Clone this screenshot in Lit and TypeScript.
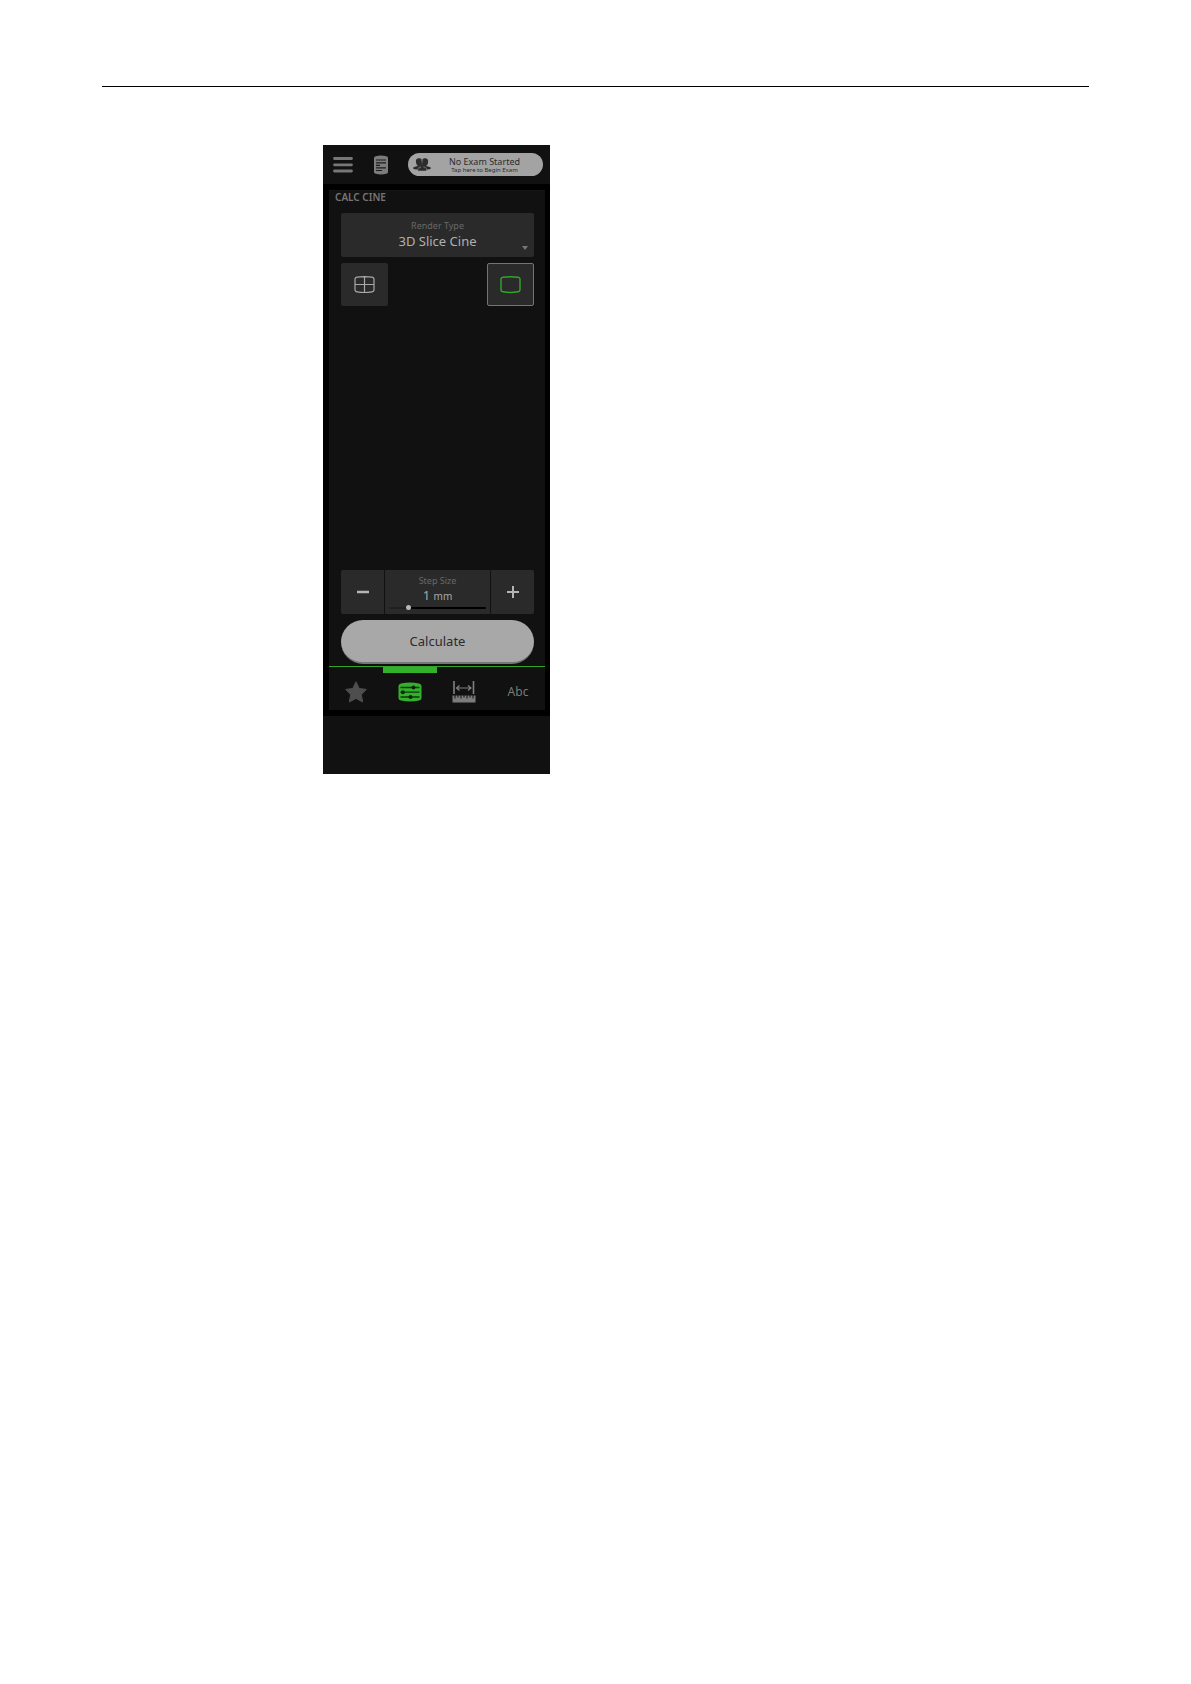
import { LitElement, html, css, svg } from "lit";
import { customElement, state } from "lit/decorators.js";

const menuIcon = svg`<svg class="icon" width="20" height="16" viewBox="0 0 20 16" aria-hidden="true">
  <path d="M1.500 1.500h17M1.500 7.800h17M1.500 14h17" stroke="#777" stroke-width="2.800" stroke-linecap="round"/>
</svg>`;

const reportIcon = svg`<svg class="icon" width="16" height="20" viewBox="0 0 16 20" aria-hidden="true">
  <path d="M1 2.500Q1.300 1 8 .6Q14.700 1 15 2.500V17.500Q14.700 19 8 19.400Q1.300 19 1 17.500Z" fill="#7c7c7c"/>
  <path d="M3 5h10M3 7.800h10M3 10.300h4M3 12.800h10M3 15.500h6" stroke="#1b1b1b" stroke-width="1.200"/>
</svg>`;

const patientsIcon = svg`<svg class="icon" width="18" height="13" viewBox="0 0 18 13" aria-hidden="true">
  <g fill="#2c2c2c">
    <path d="M9.300 1.300C10.800 -.3 14.900 -.4 15.100 2.800C15.300 5.200 14.600 7 13 8C14.500 8.600 17.900 8.600 17.900 10.400Q16 12 12.500 11.200L9 8.500Z"/>
    <path d="M8.800 1.300C7.200 -.3 3.100 -.4 2.900 2.800C2.800 5.200 3.600 7 5 8C3.500 8.600 .1 8.600 .1 10.400Q2 12 5.500 11.200L9 8.500Z"/>
    <path d="M4.800 12.800Q5 10.400 8 9.800V7.500H10.500V9.800Q13.300 10.400 13.500 12.800Z"/>
  </g>
  <path d="M9 .8V3.500M4.600 10.800Q6 9 8 8.800M13.600 10.800Q12.500 9 10.500 8.800" stroke="#9a9a9a" stroke-width=".6" fill="none"/>
</svg>`;

const screenPath = "M1 2.800Q1.200 1.500 3 1.200Q10.500 .2 18 1.200Q19.800 1.500 20 2.800V14.200Q19.800 15.500 18 15.800Q10.500 17.200 3 15.800Q1.200 15.500 1 14.200Z";

const quadIcon = svg`<svg class="icon" width="21" height="18" viewBox="0 0 21 18" aria-hidden="true">
  <path d="${screenPath}M10.500 1V16.500M1 8.500H20" fill="none" stroke="#a9a9a9" stroke-width="1.200"/>
</svg>`;

const singleIcon = svg`<svg class="icon" width="21" height="18" viewBox="0 0 21 18" aria-hidden="true">
  <path d="${screenPath}" fill="none" stroke="#31a52a" stroke-width="1.400"/>
</svg>`;

const minusIcon = svg`<svg class="icon" width="12" height="12" viewBox="0 0 12 12" aria-hidden="true">
  <path d="M0 6H12" stroke="#b4b4b4" stroke-width="2.400"/>
</svg>`;

const plusIcon = svg`<svg class="icon" width="12" height="12" viewBox="0 0 12 12" aria-hidden="true">
  <path d="M0 6H12M6 0V12" stroke="#b4b4b4" stroke-width="2"/>
</svg>`;

const starIcon = svg`<svg class="icon" width="24" height="24" viewBox="0 0 24 24" aria-hidden="true">
  <path d="M12 1.800L15.200 8.500L22.300 9.400L17.300 14.600L18.700 22L12 18.400L5.300 22L6.700 14.600L1.700 9.400L8.800 8.500Z" fill="#4e4e4e" stroke="#4e4e4e" stroke-linejoin="round"/>
</svg>`;

const controlsIcon = svg`<svg class="icon" width="24" height="20" viewBox="0 0 24 20" aria-hidden="true">
  <path d="M.5 4Q.5 2 3 1.500Q12 -.6 21 1.500Q23.500 2 23.500 4V16Q23.500 18 21 18.500Q12 20.600 3 18.500Q.5 18 .5 16Z" fill="#33b12b"/>
  <path d="M2.500 5.500H21.500M2.500 10.200H21.500M2.500 15H21.500" stroke="#123810" stroke-width="1.300"/>
  <circle cx="15.500" cy="5.500" r="2" fill="#0e260d"/><circle cx="4.800" cy="10.200" r="2" fill="#0e260d"/><circle cx="12.500" cy="15" r="2" fill="#0e260d"/>
</svg>`;

const measureIcon = svg`<svg class="icon" width="24" height="22" viewBox="0 0 24 22" aria-hidden="true">
  <path d="M2 0V13M21.500 0V13" stroke="#808080" stroke-width="1.600"/>
  <path d="M4.500 7H19M7.500 4.500L4.500 7L7.500 9.500M16 4.500L19 7L16 9.500" fill="none" stroke="#808080" stroke-width="1.200"/>
  <path d="M.5 14.500H2.500V17.500H3.500V14.500H5.500V16.500H6.500V14.500H8.500V17.500H9.500V14.500H11.500V16.500H12.500V14.500H14.500V17.500H15.500V14.500H17.500V16.500H18.500V14.500H20.500V17.500H21.500V14.500H23.500V21.500H.5Z" fill="#7c7c7c"/>
</svg>`;

@customElement("app-root")
export class AppRoot extends LitElement {
  @state() private step = 1;
  @state() private view = "single";
  @state() private tab = "controls";

  static styles = css`
    :host { display: block; background: #fff; font-family: "Noto Sans", sans-serif; }
    * { box-sizing: border-box; }
    button, select, input { font: inherit; color: inherit; margin: 0; padding: 0; border: 0; background: none; }
    button { cursor: pointer; }
    .icon { display: block; flex: none; }
    .page { padding: 86px 102px; }
    .rule { height: 1px; margin: 0 0 58px; border: 0; background: #000; }
    .figure { display: grid; grid-template-columns: 221fr 227fr 539fr; }
    .device { grid-column: 2; background: #111; padding-bottom: 58px; }
    .topbar { display: flex; align-items: center; height: 39px; padding: 0 7px 0 10px; }
    .report { margin-left: 20px; }
    .exam { display: flex; align-items: center; flex: 1; height: 23px; margin-left: 19px; padding: 0 5px; border-radius: 12px; background: #a3a3a3; color: #2b2b2b; }
    .exam-text { flex: 1; display: flex; flex-direction: column; align-items: center; padding-top: 2px; font-size: 6px; line-height: 7px; white-space: nowrap; }
    .exam-title { font-size: 9px; line-height: 10px; }
    .well { background: #000; padding: 6px 5px 6px 6px; }
    .panel { background: #111; border-top: 1px solid #161616; }
    .title { margin: 0; padding: 0 6px; font-size: 10px; line-height: 12px; font-weight: 600; color: #757575; }
    .body { display: flex; flex-direction: column; height: 463px; padding: 10px 11px 2px 12px; gap: 6px; }
    .select { display: grid; height: 44px; border-radius: 2px; background: #2a2a2a; }
    .select > * { grid-area: 1 / 1; }
    .caption { font-size: 9px; line-height: 12px; color: #686868; text-align: center; }
    .select .caption { padding-top: 7px; }
    .select select { appearance: none; width: 100%; padding-top: 12px; font-size: 13px; text-align-last: center; color: #b0b0b0; cursor: pointer; }
    .caret { align-self: end; justify-self: end; margin: 0 6px 7px; border: 3px solid transparent; border-top: 4px solid #777; border-bottom: 0; pointer-events: none; }
    .views { display: flex; justify-content: space-between; }
    .view { display: grid; place-items: center; width: 47px; height: 43px; border-radius: 2px; background: #2a2a2a; }
    .view.on { border: 1px solid #31a52a; }
    .stepper { display: grid; grid-template-columns: 43px 1fr 43px; gap: 1px; height: 44px; margin-top: auto; border-radius: 2px; overflow: hidden; }
    .stepper > * { background: #2a2a2a; }
    .stepper button { display: grid; place-items: center; }
    .value { display: flex; flex-direction: column; padding: 5px 4px 0; }
    .value output { font-size: 13px; line-height: 17px; text-align: center; color: #a8a8a8; }
    .unit { font-size: 10px; }
    .range { appearance: none; width: 100%; height: 6px; border-radius: 1px; }
    .range::-webkit-slider-runnable-track { height: 2px; border-radius: 1px; background: linear-gradient(90deg, #202020 18%, #000 18%); }
    .range::-webkit-slider-thumb { appearance: none; width: 5px; height: 5px; margin-top: -2px; border-radius: 50%; background: #b8b8b8; }
    .calculate { flex: none; height: 44px; border-radius: 22px; background: #a8a8a8; border-bottom: 2px solid #777; font-size: 13px; color: #2b2b2b; }
    .tabs { display: grid; grid-template-columns: repeat(4, 1fr); height: 44px; border-top: 1px solid #31a52a; }
    .tab { display: grid; place-items: center; padding-top: 6px; border-top: 0 solid #33b12b; font-size: 12px; color: #7a7a7a; }
    .tab.on { border-top-width: 6px; padding: 0; }
  `;

  private setStep(value: number) {
    this.step = Math.min(5.5, Math.max(0, value));
  }

  private tabButton(id: string, label: string, content: unknown) {
    return html`<button class="tab ${this.tab === id ? "on" : ""}" role="tab" aria-label=${label}
      aria-selected=${this.tab === id ? "true" : "false"} @click=${() => (this.tab = id)}>${content}</button>`;
  }

  render() {
    return html`
      <main class="page">
        <hr class="rule" />
        <div class="figure">
          <section class="device">
            <header class="topbar">
              <button aria-label="Menu">${menuIcon}</button>
              <button class="report" aria-label="Report">${reportIcon}</button>
              <button class="exam">
                ${patientsIcon}
                <span class="exam-text"><span class="exam-title">No Exam Started</span><span>Tap here to Begin Exam</span></span>
              </button>
            </header>
            <div class="well">
              <div class="panel">
                <h1 class="title">CALC CINE</h1>
                <div class="body">
                  <div class="select">
                    <label class="caption" for="render">Render Type</label>
                    <select id="render"><option>3D Slice Cine</option></select>
                    <span class="caret"></span>
                  </div>
                  <div class="views">
                    <button class="view ${this.view === "quad" ? "on" : ""}" aria-label="Quad view" @click=${() => (this.view = "quad")}>${quadIcon}</button>
                    <button class="view ${this.view === "single" ? "on" : ""}" aria-label="Single view" @click=${() => (this.view = "single")}>${singleIcon}</button>
                  </div>
                  <div class="stepper">
                    <button aria-label="Decrease" @click=${() => this.setStep(this.step - 0.5)}>${minusIcon}</button>
                    <div class="value">
                      <label class="caption" for="step">Step Size</label>
                      <output for="step">${this.step} <span class="unit">mm</span></output>
                      <input class="range" id="step" type="range" min="0" max="5.5" step="0.5" .value=${String(this.step)}
                        @input=${(e: Event) => this.setStep(Number((e.target as HTMLInputElement).value))} />
                    </div>
                    <button aria-label="Increase" @click=${() => this.setStep(this.step + 0.5)}>${plusIcon}</button>
                  </div>
                  <button class="calculate">Calculate</button>
                </div>
                <nav class="tabs" role="tablist">
                  ${this.tabButton("favorites", "Favorites", starIcon)}
                  ${this.tabButton("controls", "Controls", controlsIcon)}
                  ${this.tabButton("measure", "Measure", measureIcon)}
                  ${this.tabButton("text", "Abc", "Abc")}
                </nav>
              </div>
            </div>
          </section>
        </div>
      </main>
    `;
  }
}
